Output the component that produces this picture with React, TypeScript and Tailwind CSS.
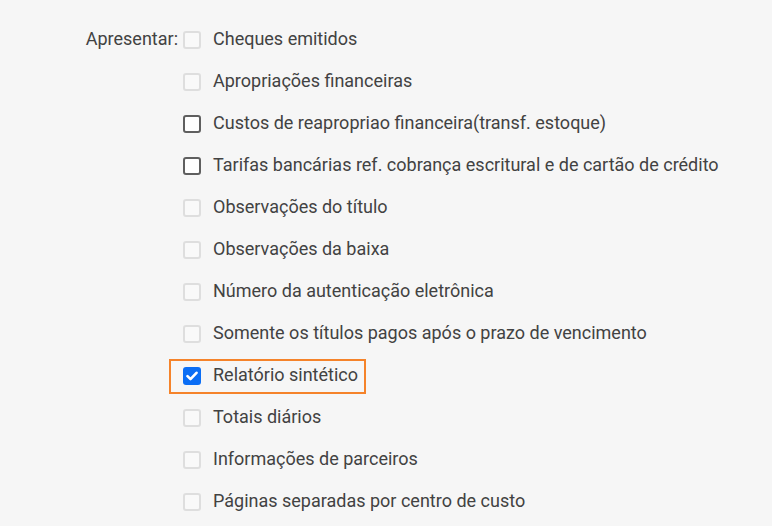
const items: { label: string; state: 'disabled' | 'enabled' | 'checked' }[] = [
  { label: 'Cheques emitidos', state: 'disabled' },
  { label: 'Apropriações financeiras', state: 'disabled' },
  { label: 'Custos de reapropriao financeira(transf. estoque)', state: 'enabled' },
  { label: 'Tarifas bancárias ref. cobrança escritural e de cartão de crédito', state: 'enabled' },
  { label: 'Observações do título', state: 'disabled' },
  { label: 'Observações da baixa', state: 'disabled' },
  { label: 'Número da autenticação eletrônica', state: 'disabled' },
  { label: 'Somente os títulos pagos após o prazo de vencimento', state: 'disabled' },
  { label: 'Relatório sintético', state: 'checked' },
  { label: 'Totais diários', state: 'disabled' },
  { label: 'Informações de parceiros', state: 'disabled' },
  { label: 'Páginas separadas por centro de custo', state: 'disabled' },
];

function Box({ state }: { state: 'disabled' | 'enabled' | 'checked' }) {
  if (state === 'checked') {
    return (
      <span className="flex h-[18px] w-[18px] shrink-0 items-center justify-center rounded-[3px] bg-[#0b6ef5]">
        <svg width="12" height="10" viewBox="0 0 12 10" fill="none">
          <path d="M1.5 5.2 L4.5 8.2 L10.5 1.8" stroke="white" strokeWidth="2.6" strokeLinecap="round" strokeLinejoin="round" />
        </svg>
      </span>
    );
  }
  return (
    <span
      className={
        state === 'enabled'
          ? 'h-[18px] w-[18px] shrink-0 rounded-[3px] border-2 border-[#5f5f5f] bg-white'
          : 'h-[18px] w-[18px] shrink-0 rounded-[3px] border-2 border-[#dedede] bg-[#f9f9f9]'
      }
    />
  );
}

export default function App() {
  return (
    <div
      className="h-[526px] w-[772px] overflow-hidden bg-[#f6f6f6] pt-[19px] text-[18px] text-[#424242]"
      style={{ fontFamily: 'Roboto, "Liberation Sans", sans-serif' }}
    >
      <div className="flex">
        <div className="relative -top-[2px] flex h-[42px] w-[178px] items-center justify-end">Apresentar:</div>
        <div className="ml-[5px] flex flex-col">
          {items.map((it) => (
            <div key={it.label} className="relative flex h-[42px] items-center gap-[12px]">
              <Box state={it.state} />
              <span className="relative -top-[2px]">{it.label}</span>
              {it.state === 'checked' && (
                <span className="pointer-events-none absolute left-[-14px] top-[4px] h-[35px] w-[197px] border-[2.5px] border-[#f5832a]" />
              )}
            </div>
          ))}
        </div>
      </div>
    </div>
  );
}
